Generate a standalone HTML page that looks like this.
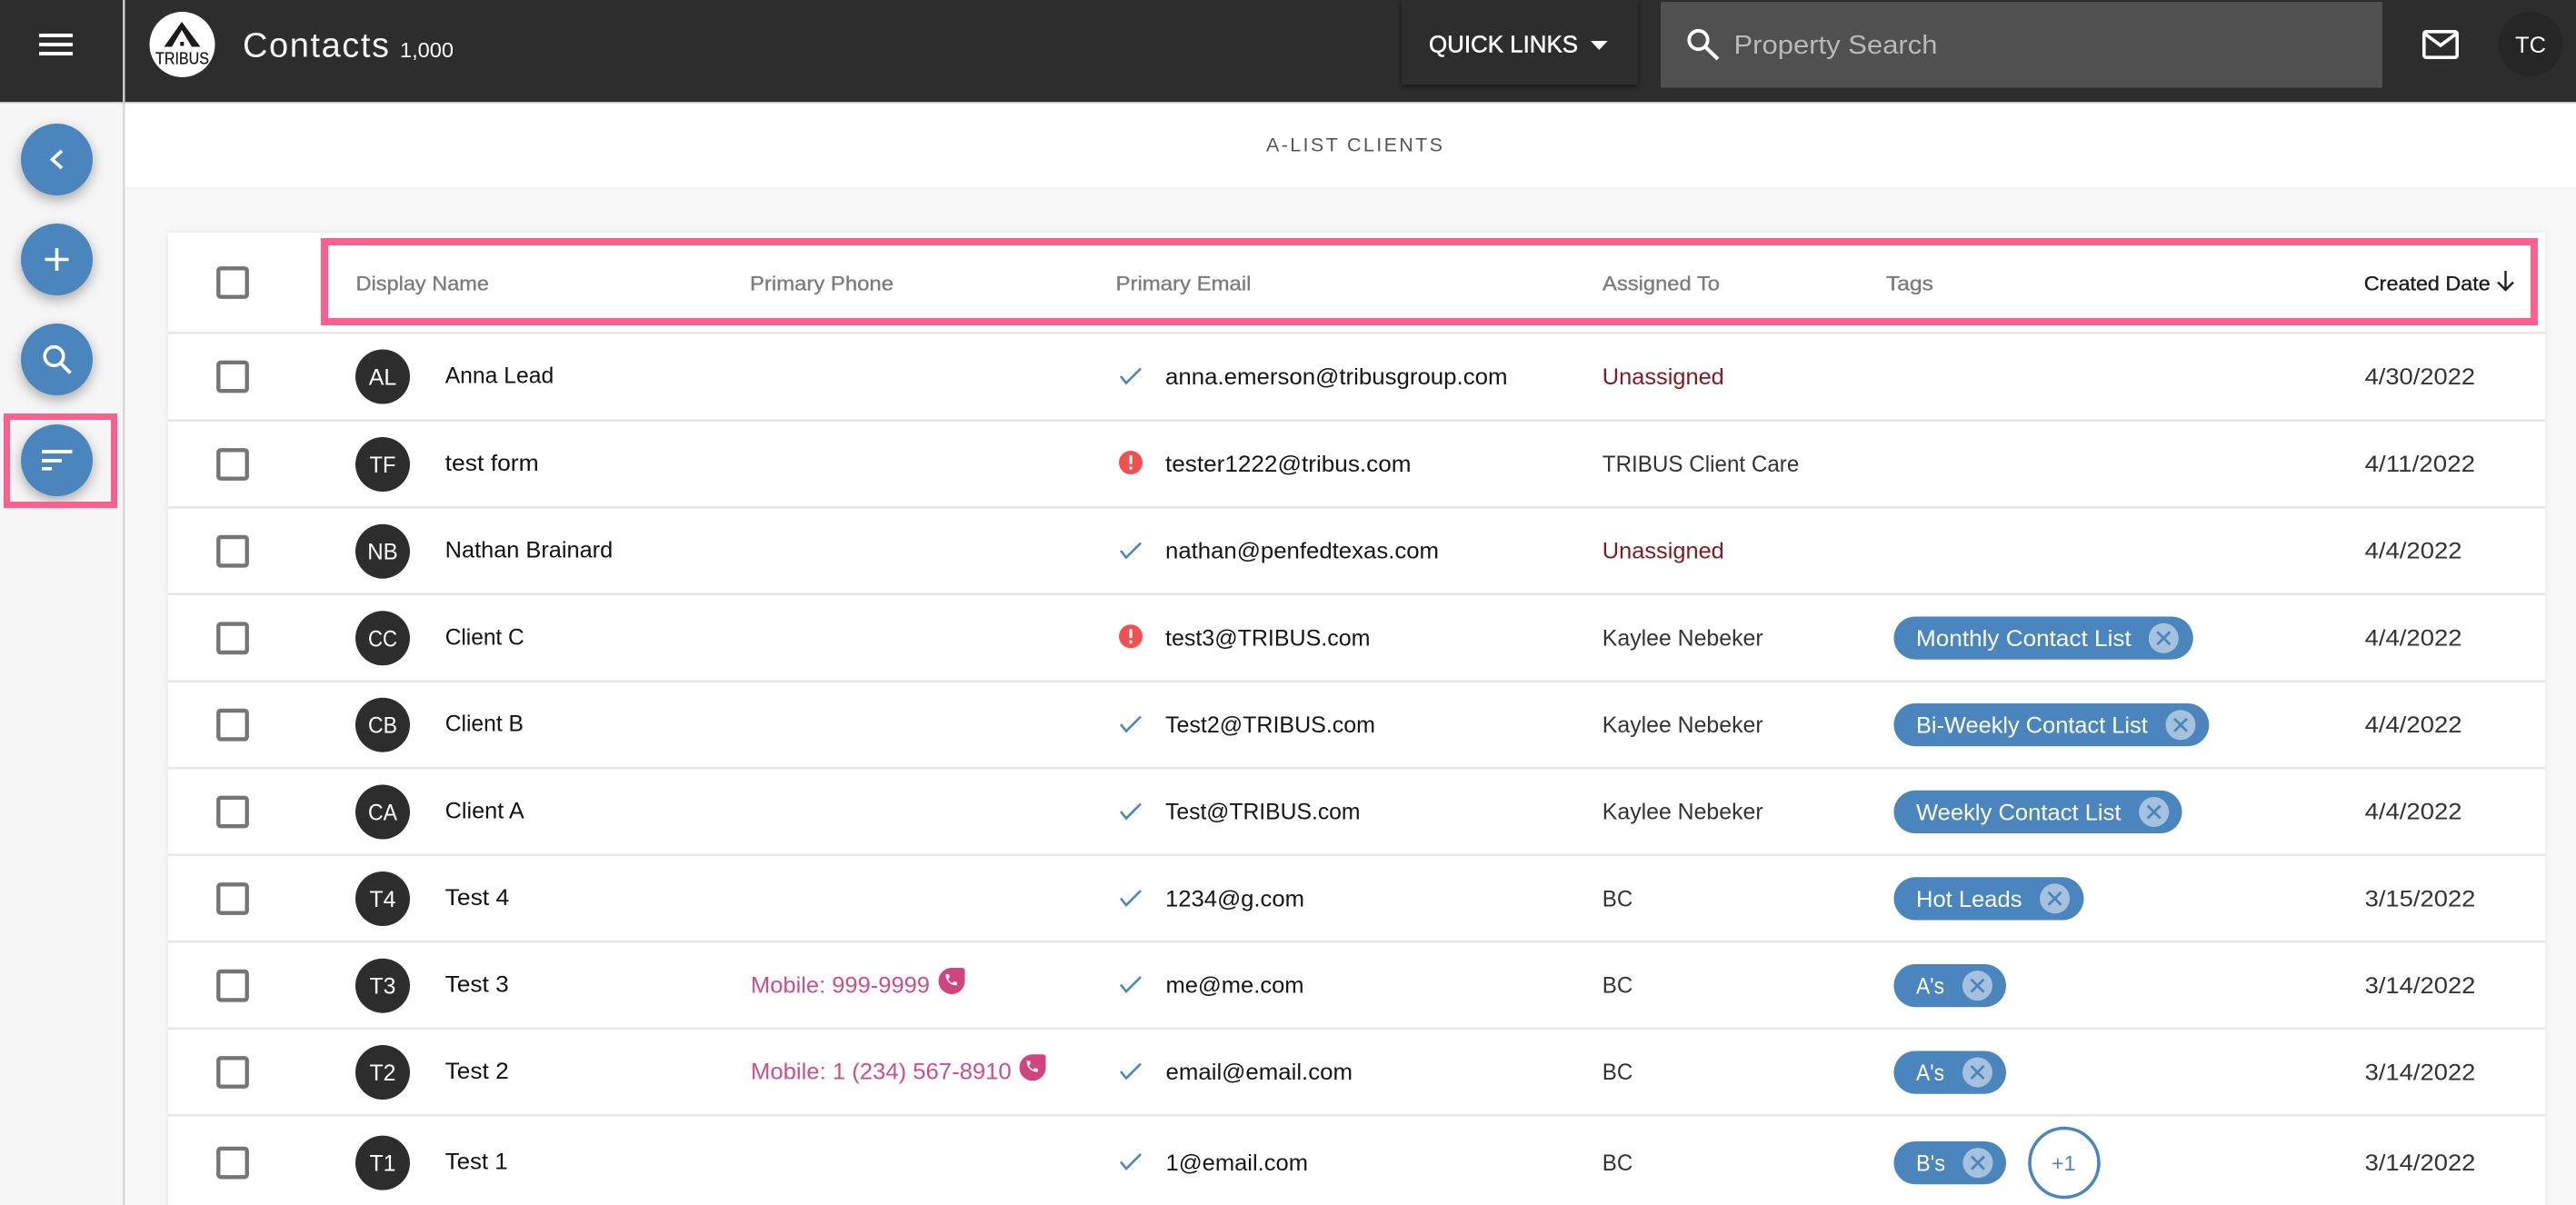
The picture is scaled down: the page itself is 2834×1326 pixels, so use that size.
<!DOCTYPE html>
<html><head><meta charset="utf-8"><title>Contacts</title>
<style>
html,body{margin:0;padding:0;width:2834px;height:1326px;overflow:hidden;background:#f8f8f8}
svg{display:block}
text{font-family:"Liberation Sans",Arial,sans-serif;white-space:pre}
.h{font-size:22px;fill:#7c7c7c;stroke:#7c7c7c;stroke-width:.35px}
.n{font-size:25px;fill:#111}
.e{font-size:25px;fill:#161616}
.a{font-size:25px;fill:#333}
.u{font-size:25px;fill:#7e1a20}
.d{font-size:25px;fill:#333}
.i{font-size:25px;fill:#fff;text-anchor:middle}
.p{font-size:25px;fill:#cc4f8b}
.t{font-size:25px;fill:#fff}
</style></head><body>
<svg xmlns="http://www.w3.org/2000/svg" width="2834" height="1326" viewBox="0 0 2834 1326">
<defs>
<g id="cb"><rect x="-15.7" y="-15.7" width="31.4" height="31.4" rx="2.5" fill="#fff" stroke="#757575" stroke-width="4.4"/></g>
<g id="av"><circle r="30" fill="#2d2d2d"/></g>
<path id="ck" d="M-11 -1 L-5 6.5 L11 -9.5" fill="none" stroke="#4a86bd" stroke-width="2.6"/>
<g id="er"><circle r="13" fill="#f44f4f"/><rect x="-1.6" y="-8" width="3.2" height="10" rx="1" fill="#fff"/><circle cy="6" r="1.8" fill="#fff"/></g>
<g id="x"><circle r="16.5" fill="#a6c1dd"/><path d="M-7 -7 L7 7 M7 -7 L-7 7" stroke="#4a86bd" stroke-width="2.8" fill="none"/></g>
<g id="ph"><path d="M14.5 0 H26 a3 3 0 0 1 3 3 V14.5 A14.5 14.5 0 1 1 14.5 0 Z" fill="#d0457f"/><path transform="translate(6 5) scale(.68)" fill="#fff" d="M6.62 10.79c1.44 2.83 3.76 5.14 6.59 6.59l2.2-2.2c.27-.27.67-.36 1.02-.24 1.12.37 2.33.57 3.57.57.55 0 1 .45 1 1V20c0 .55-.45 1-1 1-9.39 0-17-7.61-17-17 0-.55.45-1 1-1h3.5c.55 0 1 .45 1 1 0 1.25.2 2.45.57 3.57.11.35.03.74-.25 1.02l-2.2 2.2z"/></g>
<g id="sep"><rect x="185" y="0" width="2615" height="2.5" fill="#e6e6e6"/></g>
</defs>

<!-- page backgrounds -->
<rect width="2834" height="1326" fill="#f8f8f8"/>
<rect x="137" y="113" width="2697" height="94" fill="#fff"/>
<rect x="137" y="206" width="2697" height="2" fill="#f3f3f3"/>
<rect x="0" y="112" width="135" height="1214" fill="#f6f6f6"/>
<rect x="135" y="112" width="2.5" height="1214" fill="#d9d9d9"/>

<!-- top bar -->
<rect width="2834" height="112" fill="#2d2d2d"/>
<rect y="112" width="2834" height="1.5" fill="#bdbdbd"/>
<rect x="135" y="0" width="2.5" height="112" fill="#c9c9c9"/>
<rect x="43" y="37" width="37" height="4" fill="#fff"/><rect x="43" y="47" width="37" height="4" fill="#fff"/><rect x="43" y="57" width="37" height="4" fill="#fff"/>

<circle cx="200.5" cy="49" r="36" fill="#fff"/>
<path d="M200 24 L220.5 51.5 L211 51.5 L200 33 L189 51.5 L180.5 51.5 Z" fill="#1d1a18"/>
<rect x="198.3" y="46" width="4" height="4.5" fill="#1d1a18"/>
<text x="171" y="70.5" font-size="18.5" fill="#1d1a18" stroke="#1d1a18" stroke-width=".3" textLength="59" lengthAdjust="spacingAndGlyphs">TRIBUS</text>

<text x="267" y="62.5" font-size="38" fill="#f4f4f4" textLength="161">Contacts</text>
<text x="440" y="63" font-size="23" fill="#fff" textLength="59" lengthAdjust="spacingAndGlyphs">1,000</text>

<rect x="1542" y="0" width="260" height="93" fill="#2d2d2d" style="filter:drop-shadow(0 2px 3px rgba(0,0,0,.55))"/>
<text x="1572" y="57.5" font-size="26" fill="#fff" stroke="#fff" stroke-width=".5" textLength="164" lengthAdjust="spacingAndGlyphs">QUICK LINKS</text>
<path d="M1750 45 H1768.6 L1759.3 55 Z" fill="#fff"/>

<rect x="1827" y="2" width="794" height="94.5" rx="2" fill="#505050"/>
<circle cx="1868.5" cy="44" r="10.2" fill="none" stroke="#fff" stroke-width="3.8"/>
<path d="M1876 51.5 L1890 65" stroke="#fff" stroke-width="4" fill="none"/>
<text x="1907.5" y="59" font-size="29" fill="#b9b9b9" textLength="224" lengthAdjust="spacingAndGlyphs">Property Search</text>

<rect x="2666.8" y="34.8" width="36.4" height="28.4" rx="2.5" fill="none" stroke="#fff" stroke-width="3.6"/>
<path d="M2667.5 37 L2685 50 L2702.5 37" fill="none" stroke="#fff" stroke-width="3.6"/>
<circle cx="2784" cy="48.5" r="35.5" fill="#262626"/>
<text x="2767" y="58" font-size="25" fill="#fff" textLength="34" lengthAdjust="spacingAndGlyphs">TC</text>

<text x="1393" y="166.5" font-size="21.5" fill="#555" textLength="194">A-LIST CLIENTS</text>

<!-- FABs -->
<g fill="#4a86bd" style="filter:drop-shadow(0 5px 7px rgba(0,0,0,.32))">
<circle cx="62.5" cy="175.5" r="39.5"/><circle cx="62.5" cy="285.5" r="39.5"/><circle cx="62.5" cy="395.5" r="39.5"/><circle cx="62.5" cy="506.5" r="39.5"/>
</g>
<path d="M68 166 L57.5 175.5 L68 185" fill="none" stroke="#fff" stroke-width="3.6"/>
<path d="M49.5 285.5 H75.5 M62.5 273 V298" fill="none" stroke="#fff" stroke-width="3.6"/>
<circle cx="59.5" cy="392" r="10.3" fill="none" stroke="#fff" stroke-width="3.6"/>
<path d="M66.5 399.5 L77.5 410.5" fill="none" stroke="#fff" stroke-width="3.8"/>
<rect x="46" y="495" width="33.5" height="4" fill="#fff"/><rect x="46" y="505" width="22" height="3.8" fill="#fff"/><rect x="46" y="514" width="11" height="3.6" fill="#fff"/>
<rect x="7.5" y="458.5" width="118" height="97" fill="none" stroke="#ff5f8f" stroke-width="7"/>

<!-- card -->
<rect x="185" y="256" width="2615" height="1090" fill="#fff" style="filter:drop-shadow(0 0 4px rgba(0,0,0,.09))"/>

<rect x="357" y="266" width="2431" height="88" fill="none" stroke="#ff5f8f" stroke-width="8"/>
<use href="#cb" x="256" y="311"/>
<text class="h" x="391.5" y="319.5" textLength="146.5" lengthAdjust="spacingAndGlyphs">Display Name</text>
<text class="h" x="825" y="319.5" textLength="158" lengthAdjust="spacingAndGlyphs">Primary Phone</text>
<text class="h" x="1227.5" y="319.5" textLength="149" lengthAdjust="spacingAndGlyphs">Primary Email</text>
<text class="h" x="1763" y="319.5" textLength="129" lengthAdjust="spacingAndGlyphs">Assigned To</text>
<text class="h" x="2075" y="319.5" textLength="52" lengthAdjust="spacingAndGlyphs">Tags</text>
<text class="h" x="2600.8" y="319.5" textLength="139" lengthAdjust="spacingAndGlyphs" style="fill:#1c1c1c;stroke:#1c1c1c">Created Date</text>
<path d="M2756.5 298 V318 M2748 310.5 L2756.5 319 L2765 310.5" fill="none" stroke="#222" stroke-width="2.4"/>

<!-- separators -->
<use href="#sep" y="365"/><use href="#sep" y="461.5"/><use href="#sep" y="557"/><use href="#sep" y="652.5"/><use href="#sep" y="748.5"/><use href="#sep" y="844"/><use href="#sep" y="939.5"/><use href="#sep" y="1035"/><use href="#sep" y="1130.5"/><use href="#sep" y="1226"/>

<!-- row 1 -->
<use href="#cb" x="256" y="414.5"/><use href="#av" x="421" y="414.5"/>
<text class="i" x="421" y="423.5" textLength="30.5" lengthAdjust="spacingAndGlyphs">AL</text>
<text class="n" x="489.7" y="421.5" textLength="119.5" lengthAdjust="spacingAndGlyphs">Anna Lead</text>
<use href="#ck" x="1244" y="415"/>
<text class="e" x="1282" y="423" textLength="376.5" lengthAdjust="spacingAndGlyphs">anna.emerson@tribusgroup.com</text>
<text class="u" x="1762.8" y="423" textLength="134" lengthAdjust="spacingAndGlyphs">Unassigned</text>
<text class="d" x="2601.6" y="423" textLength="121.5" lengthAdjust="spacingAndGlyphs">4/30/2022</text>

<!-- row 2 -->
<use href="#cb" x="256" y="511"/><use href="#av" x="421" y="511"/>
<text class="i" x="421" y="520" textLength="29" lengthAdjust="spacingAndGlyphs">TF</text>
<text class="n" x="489.7" y="518" textLength="103" lengthAdjust="spacingAndGlyphs">test form</text>
<use href="#er" x="1244" y="509"/>
<text class="e" x="1282" y="519" textLength="270.5" lengthAdjust="spacingAndGlyphs">tester1222@tribus.com</text>
<text class="a" x="1762.8" y="519" textLength="216.5" lengthAdjust="spacingAndGlyphs">TRIBUS Client Care</text>
<text class="d" x="2601.6" y="519" textLength="121.5" lengthAdjust="spacingAndGlyphs">4/11/2022</text>

<!-- row 3 -->
<use href="#cb" x="256" y="606.7"/><use href="#av" x="421" y="606.7"/>
<text class="i" x="421" y="615.7" textLength="33.5" lengthAdjust="spacingAndGlyphs">NB</text>
<text class="n" x="489.7" y="613.7" textLength="184.5" lengthAdjust="spacingAndGlyphs">Nathan Brainard</text>
<use href="#ck" x="1244" y="607"/>
<text class="e" x="1282" y="614.7" textLength="301" lengthAdjust="spacingAndGlyphs">nathan@penfedtexas.com</text>
<text class="u" x="1762.8" y="614.7" textLength="134" lengthAdjust="spacingAndGlyphs">Unassigned</text>
<text class="d" x="2601.6" y="614.7" textLength="107" lengthAdjust="spacingAndGlyphs">4/4/2022</text>

<!-- row 4 -->
<use href="#cb" x="256" y="702.3"/><use href="#av" x="421" y="702.3"/>
<text class="i" x="421" y="711.3" textLength="32" lengthAdjust="spacingAndGlyphs">CC</text>
<text class="n" x="489.7" y="709.3" textLength="87" lengthAdjust="spacingAndGlyphs">Client C</text>
<use href="#er" x="1244" y="700.3"/>
<text class="e" x="1282" y="710.5" textLength="225.5" lengthAdjust="spacingAndGlyphs">test3@TRIBUS.com</text>
<text class="a" x="1762.8" y="710.5" textLength="176.8" lengthAdjust="spacingAndGlyphs">Kaylee Nebeker</text>
<rect x="2083.5" y="678.5" width="329.3" height="47.2" rx="23.6" fill="#4a86bd"/>
<text class="t" x="2108" y="711" textLength="236.7" lengthAdjust="spacingAndGlyphs">Monthly Contact List</text>
<use href="#x" x="2380.3" y="702.3"/>
<text class="d" x="2601.6" y="710.5" textLength="107" lengthAdjust="spacingAndGlyphs">4/4/2022</text>

<!-- row 5 -->
<use href="#cb" x="256" y="797.7"/><use href="#av" x="421" y="797.7"/>
<text class="i" x="421" y="806.7" textLength="32" lengthAdjust="spacingAndGlyphs">CB</text>
<text class="n" x="489.7" y="804.7" textLength="86.3" lengthAdjust="spacingAndGlyphs">Client B</text>
<use href="#ck" x="1244" y="798"/>
<text class="e" x="1282" y="806" textLength="231" lengthAdjust="spacingAndGlyphs">Test2@TRIBUS.com</text>
<text class="a" x="1762.8" y="806" textLength="176.8" lengthAdjust="spacingAndGlyphs">Kaylee Nebeker</text>
<rect x="2083.5" y="774" width="346.8" height="47.2" rx="23.6" fill="#4a86bd"/>
<text class="t" x="2108" y="806.5" textLength="254.8" lengthAdjust="spacingAndGlyphs">Bi-Weekly Contact List</text>
<use href="#x" x="2399" y="797.7"/>
<text class="d" x="2601.6" y="806" textLength="107" lengthAdjust="spacingAndGlyphs">4/4/2022</text>

<!-- row 6 -->
<use href="#cb" x="256" y="893.5"/><use href="#av" x="421" y="893.5"/>
<text class="i" x="421" y="902.5" textLength="32" lengthAdjust="spacingAndGlyphs">CA</text>
<text class="n" x="489.7" y="900.5" textLength="87" lengthAdjust="spacingAndGlyphs">Client A</text>
<use href="#ck" x="1244" y="894"/>
<text class="e" x="1282" y="901.7" textLength="214.5" lengthAdjust="spacingAndGlyphs">Test@TRIBUS.com</text>
<text class="a" x="1762.8" y="901.7" textLength="176.8" lengthAdjust="spacingAndGlyphs">Kaylee Nebeker</text>
<rect x="2083.5" y="869.8" width="317" height="47.2" rx="23.6" fill="#4a86bd"/>
<text class="t" x="2108" y="902.3" textLength="225.5" lengthAdjust="spacingAndGlyphs">Weekly Contact List</text>
<use href="#x" x="2369.7" y="893.5"/>
<text class="d" x="2601.6" y="901.7" textLength="107" lengthAdjust="spacingAndGlyphs">4/4/2022</text>

<!-- row 7 -->
<use href="#cb" x="256" y="989"/><use href="#av" x="421" y="989"/>
<text class="i" x="421" y="998" textLength="29" lengthAdjust="spacingAndGlyphs">T4</text>
<text class="n" x="489.7" y="996" textLength="70.5" lengthAdjust="spacingAndGlyphs">Test 4</text>
<use href="#ck" x="1244" y="989.5"/>
<text class="e" x="1282" y="997.3" textLength="153" lengthAdjust="spacingAndGlyphs">1234@g.com</text>
<text class="a" x="1762.8" y="997.3" textLength="33.5" lengthAdjust="spacingAndGlyphs">BC</text>
<rect x="2083.5" y="965.3" width="209" height="47.2" rx="23.6" fill="#4a86bd"/>
<text class="t" x="2108" y="997.8" textLength="116.5" lengthAdjust="spacingAndGlyphs">Hot Leads</text>
<use href="#x" x="2260.6" y="988.8"/>
<text class="d" x="2601.6" y="997.3" textLength="121.8" lengthAdjust="spacingAndGlyphs">3/15/2022</text>

<!-- row 8 -->
<use href="#cb" x="256" y="1084.7"/><use href="#av" x="421" y="1084.7"/>
<text class="i" x="421" y="1093.7" textLength="29" lengthAdjust="spacingAndGlyphs">T3</text>
<text class="n" x="489.7" y="1091.7" textLength="70" lengthAdjust="spacingAndGlyphs">Test 3</text>
<text class="p" x="826" y="1092.3" textLength="197" lengthAdjust="spacingAndGlyphs">Mobile: 999-9999</text>
<use href="#ph" x="1032.5" y="1065"/>
<use href="#ck" x="1244" y="1084.5"/>
<text class="e" x="1282.5" y="1092.5" textLength="152" lengthAdjust="spacingAndGlyphs">me@me.com</text>
<text class="a" x="1762.8" y="1092.5" textLength="33.5" lengthAdjust="spacingAndGlyphs">BC</text>
<rect x="2083.5" y="1061" width="123.5" height="47.2" rx="23.6" fill="#4a86bd"/>
<text class="t" x="2108" y="1093.5" textLength="31" lengthAdjust="spacingAndGlyphs">A's</text>
<use href="#x" x="2175.5" y="1084.6"/>
<text class="d" x="2601.6" y="1093" textLength="121.8" lengthAdjust="spacingAndGlyphs">3/14/2022</text>

<!-- row 9 -->
<use href="#cb" x="256" y="1180"/><use href="#av" x="421" y="1180"/>
<text class="i" x="421" y="1189" textLength="29" lengthAdjust="spacingAndGlyphs">T2</text>
<text class="n" x="489.7" y="1187" textLength="70" lengthAdjust="spacingAndGlyphs">Test 2</text>
<text class="p" x="826" y="1187.7" textLength="286.7" lengthAdjust="spacingAndGlyphs">Mobile: 1 (234) 567-8910</text>
<use href="#ph" x="1121.5" y="1160.3"/>
<use href="#ck" x="1244" y="1180"/>
<text class="e" x="1282.5" y="1187.8" textLength="205.5" lengthAdjust="spacingAndGlyphs">email@email.com</text>
<text class="a" x="1762.8" y="1187.8" textLength="33.5" lengthAdjust="spacingAndGlyphs">BC</text>
<rect x="2083.5" y="1156.5" width="123.5" height="47.2" rx="23.6" fill="#4a86bd"/>
<text class="t" x="2108" y="1189" textLength="31" lengthAdjust="spacingAndGlyphs">A's</text>
<use href="#x" x="2175.5" y="1180"/>
<text class="d" x="2601.6" y="1188.3" textLength="121.8" lengthAdjust="spacingAndGlyphs">3/14/2022</text>

<!-- row 10 -->
<use href="#cb" x="256" y="1279.6"/><use href="#av" x="421" y="1279.6"/>
<text class="i" x="421" y="1288.6" textLength="29" lengthAdjust="spacingAndGlyphs">T1</text>
<text class="n" x="489.7" y="1286.6" textLength="69" lengthAdjust="spacingAndGlyphs">Test 1</text>
<use href="#ck" x="1244" y="1279.5"/>
<text class="e" x="1282.5" y="1288" textLength="156.5" lengthAdjust="spacingAndGlyphs">1@email.com</text>
<text class="a" x="1762.8" y="1288" textLength="33.5" lengthAdjust="spacingAndGlyphs">BC</text>
<rect x="2083.5" y="1256" width="123.5" height="47.2" rx="23.6" fill="#4a86bd"/>
<text class="t" x="2108" y="1288.5" textLength="32" lengthAdjust="spacingAndGlyphs">B's</text>
<use href="#x" x="2176" y="1279.6"/>
<circle cx="2271" cy="1279.5" r="38" fill="#fff" stroke="#4a86bd" stroke-width="3.6"/>
<text x="2257" y="1288" font-size="23" fill="#4a86bd" textLength="26.5" lengthAdjust="spacingAndGlyphs">+1</text>
<text class="d" x="2601.6" y="1288" textLength="121.8" lengthAdjust="spacingAndGlyphs">3/14/2022</text>
</svg>
</body></html>
